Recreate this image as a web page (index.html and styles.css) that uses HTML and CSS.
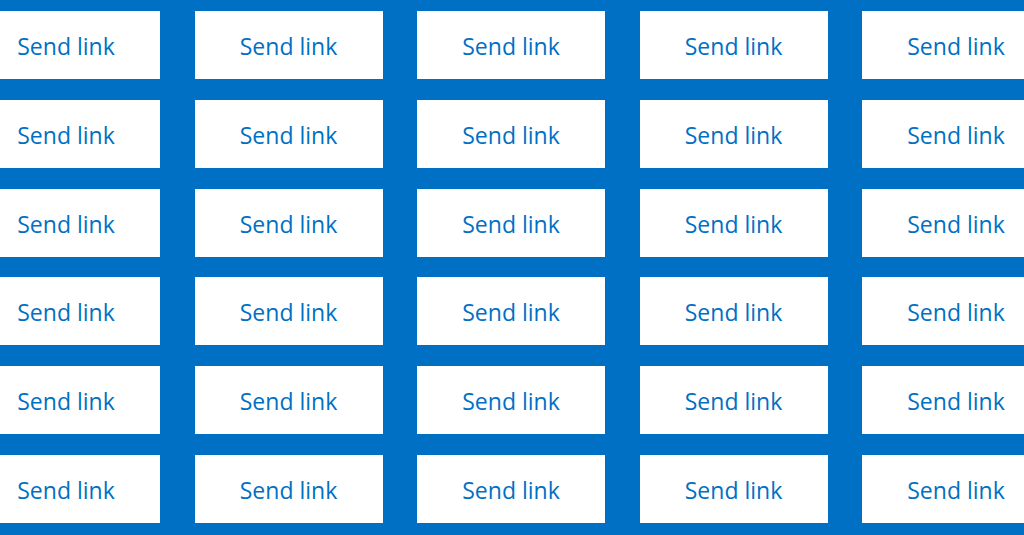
FILE: index.html
```html
<!DOCTYPE html>
<html>
<head>
<meta charset="utf-8">
<link rel="stylesheet" href="styles.css">
</head>
<body>
<div class="frame">
<div class="grid">
<div class="btn">Send link</div><div class="btn">Send link</div><div class="btn">Send link</div><div class="btn">Send link</div><div class="btn">Send link</div>
<div class="btn">Send link</div><div class="btn">Send link</div><div class="btn">Send link</div><div class="btn">Send link</div><div class="btn">Send link</div>
<div class="btn">Send link</div><div class="btn">Send link</div><div class="btn">Send link</div><div class="btn">Send link</div><div class="btn">Send link</div>
<div class="btn">Send link</div><div class="btn">Send link</div><div class="btn">Send link</div><div class="btn">Send link</div><div class="btn">Send link</div>
<div class="btn">Send link</div><div class="btn">Send link</div><div class="btn">Send link</div><div class="btn">Send link</div><div class="btn">Send link</div>
<div class="btn">Send link</div><div class="btn">Send link</div><div class="btn">Send link</div><div class="btn">Send link</div><div class="btn">Send link</div>
</div>
</div>
</body>
</html>
```
FILE: styles.css
```css
html, body {
  margin: 0;
  padding: 0;
  background: #0070c4;
}
.frame {
  width: 1024px;
  height: 535px;
  overflow: hidden;
}
.grid {
  display: grid;
  grid-template-columns: 188px 188px 188px 188px 188px;
  grid-template-rows: repeat(6, 68px);
  column-gap: 34.5px;
  row-gap: 20.8px;
  padding-top: 11px;
  margin-left: -28px;
  width: 1100px;
}
.btn {
  background: #ffffff;
  color: #0070c4;
  font-family: "Open Sans", "Noto Sans", sans-serif;
  font-size: 23px;
  display: flex;
  align-items: center;
  justify-content: center;
  padding-top: 2px;
  box-sizing: border-box;
}
```
